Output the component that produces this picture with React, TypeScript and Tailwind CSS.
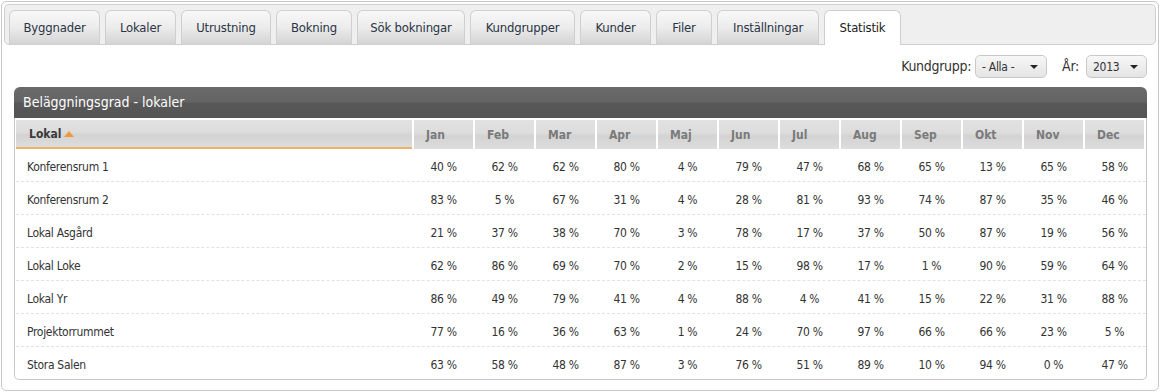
import React from "react";

const tabs = [
  { label: "Byggnader", w: "w-[91px]" },
  { label: "Lokaler", w: "w-[71px]" },
  { label: "Utrustning", w: "w-[90px]" },
  { label: "Bokning", w: "w-[76px]" },
  { label: "Sök bokningar", w: "w-[108px]" },
  { label: "Kundgrupper", w: "w-[105px]" },
  { label: "Kunder", w: "w-[71px]" },
  { label: "Filer", w: "w-[56px]" },
  { label: "Inställningar", w: "w-[102px]" },
  { label: "Statistik", w: "w-[77px]", active: true },
];

const months = ["Jan", "Feb", "Mar", "Apr", "Maj", "Jun", "Jul", "Aug", "Sep", "Okt", "Nov", "Dec"];

const rows: [string, number[]][] = [
  ["Konferensrum 1", [40, 62, 62, 80, 4, 79, 47, 68, 65, 13, 65, 58]],
  ["Konferensrum 2", [83, 5, 67, 31, 4, 28, 81, 93, 74, 87, 35, 46]],
  ["Lokal Asgård", [21, 37, 38, 70, 3, 78, 17, 37, 50, 87, 19, 56]],
  ["Lokal Loke", [62, 86, 69, 70, 2, 15, 98, 17, 1, 90, 59, 64]],
  ["Lokal Yr", [86, 49, 79, 41, 4, 88, 4, 41, 15, 22, 31, 88]],
  ["Projektorrummet", [77, 16, 36, 63, 1, 24, 70, 97, 66, 66, 23, 5]],
  ["Stora Salen", [63, 58, 48, 87, 3, 76, 51, 89, 10, 94, 0, 47]],
];

const font = "font-['DejaVu_Sans_Condensed','DejaVu_Sans',sans-serif] font-stretch-condensed";

function Select({ value, w }: { value: string; w: string }) {
  return (
    <div className={`${w} h-[23px] flex items-center justify-between pl-[6px] pr-[8px] border border-[#c9c9c9] rounded-[5px] bg-gradient-to-b from-[#f7f7f7] to-[#e4e4e4] text-[12px] tracking-[-0.3px] text-[#333]`}>
      <span>{value}</span>
      <span className="w-0 h-0 border-l-[4px] border-r-[4px] border-t-[4px] border-l-transparent border-r-transparent border-t-[#222]" />
    </div>
  );
}

export default function App() {
  return (
    <div className={`p-px bg-white ${font}`}>
      <div className="h-[390px] border border-[#c8c8c8] rounded-[5px] p-[2px]">
        {/* flikar */}
        <div className="h-[41px] border border-[#cfcfcf] rounded-[5px] bg-[#efefef] pl-[4px] pt-[5px] flex gap-[5px]">
          {tabs.map((t) => (
            <div
              key={t.label}
              className={
                t.active
                  ? `${t.w} h-[35px] -mb-px flex items-center justify-center border border-b-0 border-[#cfcfcf] rounded-t-[6px] bg-white text-[13px] tracking-[-0.2px] text-[#222]`
                  : `${t.w} h-[34px] flex items-center justify-center border border-b-0 border-[#cfcfcf] rounded-t-[6px] bg-gradient-to-b from-[#f8f8f8] via-[#ececec] to-[#d4d4d4] text-[13px] tracking-[-0.2px] text-[#2a3445]`
              }
            >
              {t.label}
            </div>
          ))}
        </div>

        {/* filter */}
        <div className="mt-[10px] pr-[9px] flex justify-end items-center text-[14px] tracking-[-0.3px] text-[#333]">
          <span className="mr-[4px]">Kundgrupp:</span>
          <Select value="- Alla -" w="w-[72px]" />
          <span className="ml-[15px] mr-[7px]">År:</span>
          <Select value="2013" w="w-[61px]" />
        </div>

        {/* panel */}
        <div className="mt-[9px] ml-[10px] mr-[9px]">
          <div className="h-[31px] rounded-t-[6px] bg-[linear-gradient(#6a6a6a,#646464_48%,#585858_52%,#545454)] pl-[9px] flex items-center text-white text-[14px]">
            Beläggningsgrad - lokaler
          </div>
          <div className="border border-t-0 border-[#c8c8c8] rounded-b-[5px] pl-px pt-[2px] h-[262px]">
            <div className="grid grid-cols-[396px_repeat(12,59px)] gap-x-[2px]">
              <div className="h-[29px] flex items-center pl-[13px] border-b-2 border-[#f0b266] bg-[linear-gradient(#e2e2e2,#dcdcdc_45%,#d3d3d3_55%,#dddddd)] text-[12px] font-bold text-[#3a3a3a]">
                Lokal
                <span className="ml-[3px] w-0 h-0 border-l-[5px] border-r-[5px] border-b-[6px] border-l-transparent border-r-transparent border-b-[#ef9a3a]" />
              </div>
              {months.map((m) => (
                <div key={m} className="h-[29px] flex items-center pl-[12px] bg-[linear-gradient(#e2e2e2,#dcdcdc_45%,#d3d3d3_55%,#dddddd)] text-[12px] font-bold text-[#7a7a7a]">
                  {m}
                </div>
              ))}
            </div>
            {rows.map(([name, vals], i) => (
              <div
                key={name}
                className={`grid grid-cols-[396px_repeat(12,59px)] gap-x-[2px] h-[33px] pt-[3px] items-center text-[12px] tracking-[-0.3px] text-[#333] ${i < rows.length - 1 ? "border-b border-dashed border-[#e2e2e2]" : ""}`}
              >
                <div className="pl-[11px]">{name}</div>
                {vals.map((v, j) => (
                  <div key={j} className="text-center">
                    {v} %
                  </div>
                ))}
              </div>
            ))}
          </div>
        </div>
      </div>
    </div>
  );
}
